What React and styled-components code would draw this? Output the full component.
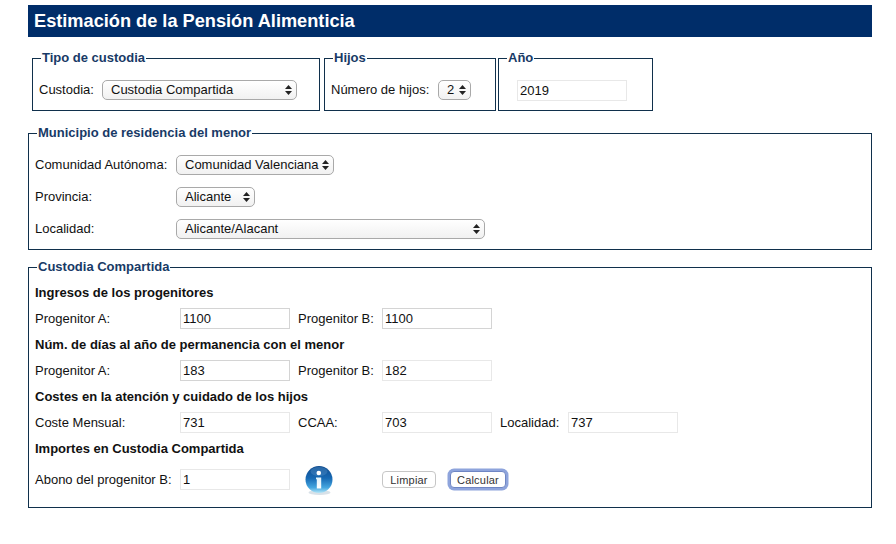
import React from "react";
import styled, { createGlobalStyle } from "styled-components";

const GlobalStyle = createGlobalStyle`
  html, body {
    margin: 0;
    background: #fff;
    font-family: "Liberation Sans", Arial, sans-serif;
    font-size: 13px;
    color: #111;
  }
`;

const Page = styled("div")`
  width: 896px;
  height: 544px;
  box-sizing: border-box;
  padding: 5px 24px 0 28px;
  overflow: hidden;
`;

const TitleBar = styled("h1")`
  margin: 0;
  height: 32px;
  padding-left: 6px;
  background: #002d69;
  color: #fff;
  font-size: 18.2px;
  line-height: 32px;
  font-weight: bold;
`;

const TopRow = styled("div")`
  display: flex;
  align-items: flex-start;
  margin: 14px 0 0 4px;
`;

const Box = styled("fieldset")`
  box-sizing: border-box;
  min-width: 0;
  margin: ${(p) => p.$margin || "0"};
  padding: ${(p) => p.$padding || "9px 6px 0"};
  width: ${(p) => p.$width || "auto"};
  height: ${(p) => p.$height};
  border: 1px solid #10304c;
`;

const Legend = styled("legend")`
  padding: 0 1px;
  margin-left: 2px;
  color: #183a66;
  font-weight: bold;
  font-size: 13px;
  line-height: 14px;
`;

const Row = styled("div")`
  display: flex;
  align-items: center;
  height: ${(p) => p.$height || "32px"};
`;

const Label = styled("label")`
  flex: none;
  width: ${(p) => p.$width};
  margin: 0 0 ${(p) => (p.$raised ? "2px" : "0")} ${(p) => p.$gap || "0"};
  white-space: nowrap;
`;

const SelectWrap = styled("span")`
  position: relative;
  flex: none;
  display: block;
  width: ${(p) => p.$width};
  height: 20px;
`;

const NativeSelect = styled("select")`
  appearance: none;
  display: block;
  width: 100%;
  height: 100%;
  box-sizing: border-box;
  margin: 0;
  padding: 0 0 2px 8px;
  border: 1px solid #a9a9a9;
  border-radius: 5px;
  background: linear-gradient(#fff, #f1f1f1);
  font: inherit;
  color: #111;
`;

const Arrows = styled("svg")`
  position: absolute;
  top: 5px;
  right: 5px;
  width: 7px;
  height: 10px;
  pointer-events: none;
`;

const Field = styled("input")`
  flex: none;
  box-sizing: border-box;
  width: 110px;
  height: 21px;
  margin: 0 0 0 ${(p) => p.$indent || "0"};
  padding: 0 0 0 2px;
  border: 1px solid ${(p) => (p.$strong ? "#d4d4d4" : "#e8e8e8")};
  outline: none;
  font: inherit;
  color: #111;
`;

const SubHead = styled("h2")`
  margin: 0;
  font-size: 13px;
  line-height: 15px;
  font-weight: bold;
  color: #111;
`;

const Button = styled("button")`
  flex: none;
  box-sizing: border-box;
  height: 17px;
  margin: 0 0 0 ${(p) => p.$gap || "0"};
  padding: 0;
  width: ${(p) => p.$width};
  background: #fff;
  border: 1px solid #c6c6c6;
  border-radius: 4px;
  font-family: inherit;
  font-size: 11px;
  letter-spacing: 0.2px;
  color: #333;
  ${(p) => p.$focused && "box-shadow: 0 0 0 2.5px #8ea4dc; border-color: #6f86c4;"}
`;

const InfoIcon = styled("svg")`
  flex: none;
  width: 32px;
  height: 32px;
  margin: 0 47px 0 13px;
`;

const Select = ({ width, value }) => (
  <SelectWrap $width={width}>
    <NativeSelect defaultValue={value}>
      <option>{value}</option>
    </NativeSelect>
    <Arrows viewBox="0 0 7 10">
      <path d="M3.5 0 L7 4 H0 Z M3.5 10 L0 6 H7 Z" fill="#222" />
    </Arrows>
  </SelectWrap>
);

const Info = () => (
  <InfoIcon viewBox="0 0 32 32">
    <defs>
      <linearGradient id="ball" x1="0" y1="0" x2="0" y2="1">
        <stop offset="0" stopColor="#104a8c" />
        <stop offset="0.45" stopColor="#1669b4" />
        <stop offset="0.8" stopColor="#45a7e0" />
        <stop offset="1" stopColor="#b4e6f8" />
      </linearGradient>
      <linearGradient id="stem" x1="0" y1="0" x2="0" y2="1">
        <stop offset="0" stopColor="#dff2fb" />
        <stop offset="1" stopColor="#ffffff" />
      </linearGradient>
    </defs>
    <ellipse cx="16.5" cy="28.5" rx="11" ry="2.5" fill="#9db4c6" opacity="0.4" />
    <circle cx="16" cy="15.5" r="13.5" fill="url(#ball)" />
    <ellipse cx="16" cy="7.5" rx="8.5" ry="4.5" fill="#5d9ad0" opacity="0.35" />
    <circle cx="15.8" cy="9" r="2.3" fill="#fff" />
    <path d="M13 13.5 H18.2 V24.5 H13.8 V15.2 H13 Z" fill="url(#stem)" />
  </InfoIcon>
);

const App = () => (
  <Page>
    <GlobalStyle />
    <TitleBar>Estimación de la Pensión Alimenticia</TitleBar>

    <TopRow>
      <Box $width="288px" $height="60px">
        <Legend>Tipo de custodia</Legend>
        <Row>
          <Label $raised $width="63px">Custodia:</Label>
          <Select width="195px" value="Custodia Compartida" />
        </Row>
      </Box>
      <Box $width="172px" $height="60px" $margin="0 0 0 4px">
        <Legend>Hijos</Legend>
        <Row>
          <Label $raised $width="107px">Número de hijos:</Label>
          <Select width="33px" value="2" />
        </Row>
      </Box>
      <Box $width="155px" $height="60px" $margin="0 0 0 2px">
        <Legend>Año</Legend>
        <Row>
          <Field $indent="12px" defaultValue="2019" />
        </Row>
      </Box>
    </TopRow>

    <Box $height="124px" $margin="15px 0 0">
      <Legend>Municipio de residencia del menor</Legend>
      <Row>
        <Label $raised $width="141px">Comunidad Autónoma:</Label>
        <Select width="158px" value="Comunidad Valenciana" />
      </Row>
      <Row>
        <Label $raised $width="141px">Provincia:</Label>
        <Select width="79px" value="Alicante" />
      </Row>
      <Row>
        <Label $raised $width="141px">Localidad:</Label>
        <Select width="309px" value="Alicante/Alacant" />
      </Row>
    </Box>

    <Box $height="248px" $margin="10px 0 0" $padding="11px 6px 0">
      <Legend>Custodia Compartida</Legend>
      <SubHead>Ingresos de los progenitores</SubHead>
      <Row $height="37px">
        <Label $width="145px">Progenitor A:</Label>
        <Field $strong defaultValue="1100" />
        <Label $width="84px" $gap="8px">Progenitor B:</Label>
        <Field $strong defaultValue="1100" />
      </Row>
      <SubHead>Núm. de días al año de permanencia con el menor</SubHead>
      <Row $height="37px">
        <Label $width="145px">Progenitor A:</Label>
        <Field $strong defaultValue="183" />
        <Label $width="84px" $gap="8px">Progenitor B:</Label>
        <Field defaultValue="182" />
      </Row>
      <SubHead>Costes en la atención y cuidado de los hijos</SubHead>
      <Row $height="37px">
        <Label $width="145px">Coste Mensual:</Label>
        <Field defaultValue="731" />
        <Label $width="84px" $gap="8px">CCAA:</Label>
        <Field defaultValue="703" />
        <Label $width="68px" $gap="8px">Localidad:</Label>
        <Field defaultValue="737" />
      </Row>
      <SubHead>Importes en Custodia Compartida</SubHead>
      <Row $height="47px">
        <Label $width="145px">Abono del progenitor B:</Label>
        <Field defaultValue="1" />
        <Info />
        <Button $width="54px">Limpiar</Button>
        <Button $width="56px" $gap="14px" $focused>Calcular</Button>
      </Row>
    </Box>
  </Page>
);

export default App;
